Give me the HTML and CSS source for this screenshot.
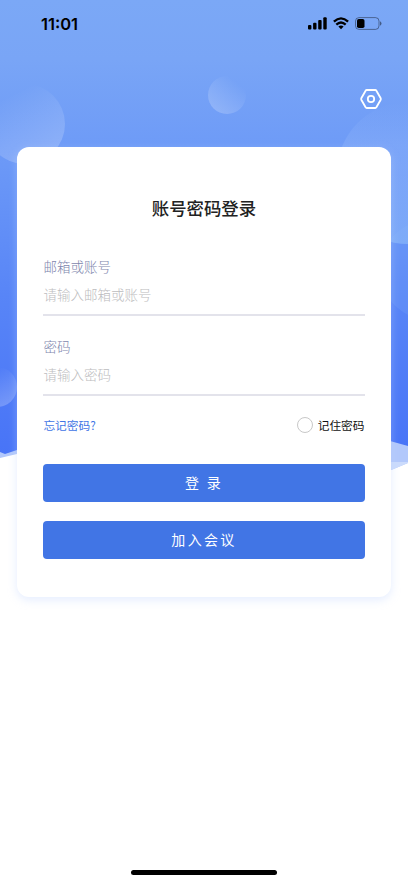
FILE: index.html
```html
<!DOCTYPE html>
<html lang="zh-CN">
  <head>
    <meta charset="UTF-8" />
    <meta name="viewport" content="width=device-width, initial-scale=1.0" />
    <title>账号密码登录</title>
    <link rel="stylesheet" href="styles.css">
  </head>
  <body>
    <div class="page">
      <svg class="backdrop" viewBox="0 0 408 480" aria-hidden="true">
        <defs>
          <linearGradient id="sky" x1="0" y1="0" x2="0" y2="1">
            <stop offset="0" stop-color="#7ba8f6" />
            <stop offset="0.13" stop-color="#79a5f6" />
            <stop offset="0.32" stop-color="#6e9bf7" />
            <stop offset="0.65" stop-color="#5885f7" />
            <stop offset="1" stop-color="#4874f7" />
          </linearGradient>
          <linearGradient id="bubble" x1="0.4" y1="0.1" x2="0.8" y2="0.9">
            <stop offset="0" stop-color="#fff" stop-opacity="0" />
            <stop offset="1" stop-color="#fff" stop-opacity="0.22" />
          </linearGradient>
          <linearGradient id="bubble-small" x1="0.8" y1="0.2" x2="0.25" y2="0.9">
            <stop offset="0" stop-color="#fff" stop-opacity="0" />
            <stop offset="1" stop-color="#fff" stop-opacity="0.2" />
          </linearGradient>
          <linearGradient id="bubble-big" x1="0" y1="0" x2="0" y2="1">
            <stop offset="0" stop-color="#9fc0fb" stop-opacity="0" />
            <stop offset="0.3" stop-color="#9fc0fb" stop-opacity="0.28" />
            <stop offset="1" stop-color="#8ebcf9" stop-opacity="0.6" />
          </linearGradient>
        </defs>
        <path d="M0 440H408V463L390 470.500L17 454L0 458Z" fill="#b2c8fb" />
        <path d="M380 462H408V463L390 470.500L380 474Z" fill="#cbdbfc" />
        <path d="M0 0H408V446L390 441L17 450L5 454L0 452Z" fill="url(#sky)" />
        <circle cx="25" cy="124" r="40" fill="url(#bubble)" />
        <circle cx="227" cy="95" r="19" fill="url(#bubble-small)" />
        <circle cx="430" cy="270" r="50" fill="#8ebcf9" fill-opacity="0.15" />
        <circle cx="408" cy="173" r="71" fill="url(#bubble-big)" />
        <circle cx="-3" cy="387" r="20" fill="url(#bubble)" />
      </svg>

      <header class="status-bar">
        <span class="time">11:01</span>
        <div class="status-icons">
          <svg width="19" height="13" viewBox="0 0 19 13">
            <rect x="0" y="8" width="3.400" height="4.500" rx="1" />
            <rect x="5.100" y="5.700" width="3.400" height="6.800" rx="1" />
            <rect x="10.200" y="3" width="3.400" height="9.500" rx="1" />
            <rect x="15.300" y="0.300" width="3.400" height="12.200" rx="1" />
          </svg>
          <svg width="16" height="13" viewBox="0 0 16 13">
            <g fill="none" stroke="#000" stroke-width="2.300">
              <path d="M0.900 4.600Q8 -1.900 15.100 4.600" />
              <path d="M3.300 7.700Q8 3.400 12.700 7.700" />
            </g>
            <path d="M5.400 9.600Q8 7.600 10.600 9.600L8 12.300Z" />
          </svg>
          <svg width="27" height="13" viewBox="0 0 27 13">
            <rect x="0.500" y="0.600" width="23.500" height="11.800" rx="3.500" fill="none" stroke="#000" stroke-opacity="0.4" />
            <rect x="2" y="2" width="7.500" height="9" rx="1.800" />
            <path d="M25 4.300Q26.500 5 26.500 6.500T25 8.700Z" fill-opacity="0.45" />
          </svg>
        </div>
      </header>

      <div class="toolbar">
        <button class="settings" aria-label="设置">
          <svg width="22" height="20" viewBox="0 0 22 20" fill="none" stroke="#fff" stroke-width="1.800" stroke-linejoin="round">
            <path d="M6.700 1H15.300Q16 1 16.400 1.700L20.700 9.300Q21 10 20.700 10.700L16.400 18.300Q16 19 15.300 19H6.700Q6 19 5.600 18.300L1.300 10.700Q1 10 1.300 9.300L5.600 1.700Q6 1 6.700 1Z" />
            <circle cx="11" cy="10" r="3.200" />
          </svg>
        </button>
      </div>

      <form class="card">
        <h1>账号密码登录</h1>
        <div class="field">
          <label for="account">邮箱或账号</label>
          <input id="account" type="text" placeholder="请输入邮箱或账号" />
        </div>
        <div class="field">
          <label for="password">密码</label>
          <input id="password" type="password" placeholder="请输入密码" />
        </div>
        <div class="options">
          <a class="forgot" href="#">忘记密码?</a>
          <label class="remember"><input type="checkbox" /><span>记住密码</span></label>
        </div>
        <button class="btn btn-login" type="button">登 录</button>
        <button class="btn" type="button">加入会议</button>
      </form>

      <div class="home-indicator"></div>
    </div>
  </body>
</html>
```
FILE: styles.css
```css
* {
  box-sizing: border-box;
}
body {
  margin: 0;
  background: #fff;
  font-family: "Noto Sans CJK SC", sans-serif;
}
.page {
  position: relative;
  display: flex;
  flex-direction: column;
  height: 883px;
  overflow: hidden;
}
.backdrop {
  position: absolute;
  top: 0;
  left: 0;
  width: 408px;
  height: 480px;
  z-index: -1;
}

.status-bar {
  display: flex;
  justify-content: space-between;
  align-items: center;
  height: 47px;
  padding: 0 26px 0 41px;
}
.time {
  font-family: Inter, sans-serif;
  font-size: 16.500px;
  font-weight: 600;
  line-height: 20px;
}
.status-icons {
  display: flex;
  gap: 6px;
}

.toolbar {
  display: flex;
  justify-content: flex-end;
  align-items: center;
  height: 100px;
  padding: 4px 26.500px 0 0;
}
.settings {
  display: flex;
  padding: 0;
  border: none;
  background: none;
}

.card {
  display: flex;
  flex-direction: column;
  height: 450px;
  margin: 0 17px;
  padding: 48px 26.500px 0 26.400px;
  border-radius: 12px;
  background: #fff;
  box-shadow: 0 3px 10px rgba(190, 210, 255, 0.4);
}
h1 {
  margin: 0 0 35px;
  font-size: 17.400px;
  font-weight: 500;
  line-height: 26px;
  text-align: center;
  color: #222;
}
.field {
  display: flex;
  flex-direction: column;
  height: 80px;
}
.field label {
  font-size: 13.500px;
  font-weight: 300;
  line-height: 20px;
  color: #7e86ad;
}
.field input {
  height: 40px;
  padding: 0 0 2px;
  border: none;
  border-bottom: 2px solid #e3e3eb;
  outline: none;
  background: none;
  font-family: inherit;
  font-size: 13.500px;
  font-weight: 300;
}
.field input::placeholder {
  color: #bcbcbe;
}

.options {
  display: flex;
  justify-content: space-between;
  align-items: center;
  height: 20px;
  margin: -1px 0 29px;
  font-size: 11.700px;
}
.forgot,
.remember span {
  padding-bottom: 2px;
}
.forgot {
  color: #4175e5;
  text-decoration: none;
}
.remember {
  display: flex;
  align-items: center;
  gap: 5px;
  color: #111;
}
.remember input {
  appearance: none;
  width: 16px;
  height: 16px;
  margin: 0;
  border: 1px solid #c8c8c8;
  border-radius: 50%;
}

.btn {
  height: 38px;
  padding: 0 0 3px;
  border: none;
  border-radius: 4px;
  background: #4175e5;
  color: #fff;
  font-family: inherit;
  font-size: 14px;
  font-weight: 400;
  letter-spacing: 2.300px;
}
.btn-login {
  margin-bottom: 19px;
}

.home-indicator {
  width: 146px;
  height: 5px;
  margin: auto auto 8px 131px;
  border-radius: 3px;
  background: #000;
}
```
